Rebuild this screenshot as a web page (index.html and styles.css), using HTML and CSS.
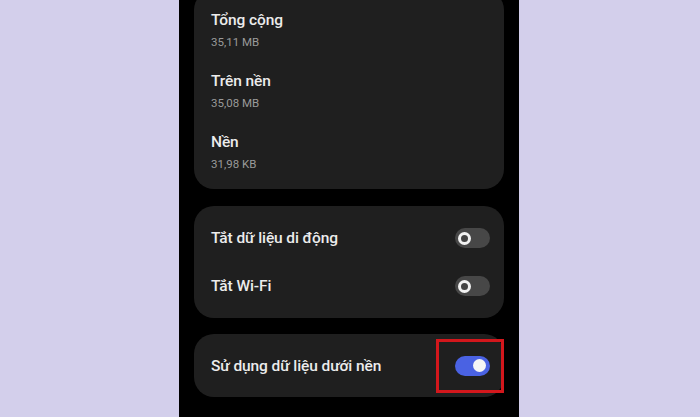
FILE: index.html
```html
<!DOCTYPE html>
<html lang="vi">
<head>
<meta charset="utf-8">
<link rel="stylesheet" href="styles.css">
</head>
<body>
<div class="phone">
  <section class="card usage">
    <div class="stat">
      <div class="title">Tổng cộng</div>
      <div class="sub">35,11 MB</div>
    </div>
    <div class="stat">
      <div class="title">Trên nền</div>
      <div class="sub">35,08 MB</div>
    </div>
    <div class="stat">
      <div class="title">Nền</div>
      <div class="sub">31,98 KB</div>
    </div>
  </section>
  <section class="card toggles">
    <div class="row">
      <span class="title">Tắt dữ liệu di động</span>
      <span class="switch"><span class="knob"></span></span>
    </div>
    <div class="row">
      <span class="title">Tắt Wi-Fi</span>
      <span class="switch"><span class="knob"></span></span>
    </div>
  </section>
  <section class="card single">
    <div class="row">
      <span class="title">Sử dụng dữ liệu dưới nền</span>
      <span class="switch on"><span class="knob"></span><span class="highlight"></span></span>
    </div>
  </section>
</div>
</body>
</html>
```
FILE: styles.css
```css
html, body {
  margin: 0;
  height: 100%;
}
body {
  background: #d3cfeb;
  font-family: Roboto, "Noto Sans", "Liberation Sans", sans-serif;
  overflow: hidden;
}
.phone {
  width: 340px;
  height: 417px;
  margin-left: 179px;
  background: #000;
  padding: 0 15px;
  box-sizing: border-box;
  display: flex;
  flex-direction: column;
  gap: 16px;
}
.card {
  background: #1f1f1f;
  border-radius: 20px;
}
.usage {
  margin-top: -10px;
  padding: 19px 17px 16px;
  display: flex;
  flex-direction: column;
  gap: 19px;
  margin-bottom: 1px;
}
.title {
  color: #ececec;
  font-size: 15.5px;
  font-weight: 500;
  letter-spacing: -0.1px;
  line-height: 22px;
}
.sub {
  color: #9a9a9a;
  font-size: 11.5px;
  line-height: 18px;
  margin-top: 2px;
}
.toggles {
  padding: 8px 14px 8px 17px;
}
.row {
  height: 48px;
  display: flex;
  align-items: center;
  justify-content: space-between;
}
.single {
  height: 63px;
  padding: 0 14px 0 17px;
  box-sizing: border-box;
  display: flex;
  flex-direction: column;
  justify-content: center;
}
.switch {
  position: relative;
  width: 35px;
  height: 20px;
  border-radius: 10px;
  background: #474747;
  display: flex;
  align-items: center;
  padding: 0 3px;
  box-sizing: border-box;
}
.knob {
  width: 13px;
  height: 13px;
  border-radius: 50%;
  border: 3px solid #f2f2f2;
  box-sizing: border-box;
  background: #444;
}
.switch.on {
  background: #4a62e3;
  justify-content: flex-end;
  padding: 0 4px;
}
.switch.on .knob {
  width: 13px;
  height: 13px;
  border: none;
  background: #f5f5f5;
}
.highlight {
  position: absolute;
  left: -19px;
  top: -17px;
  width: 68px;
  height: 54px;
  border: 3px solid #d3171c;
  box-sizing: border-box;
}
```
